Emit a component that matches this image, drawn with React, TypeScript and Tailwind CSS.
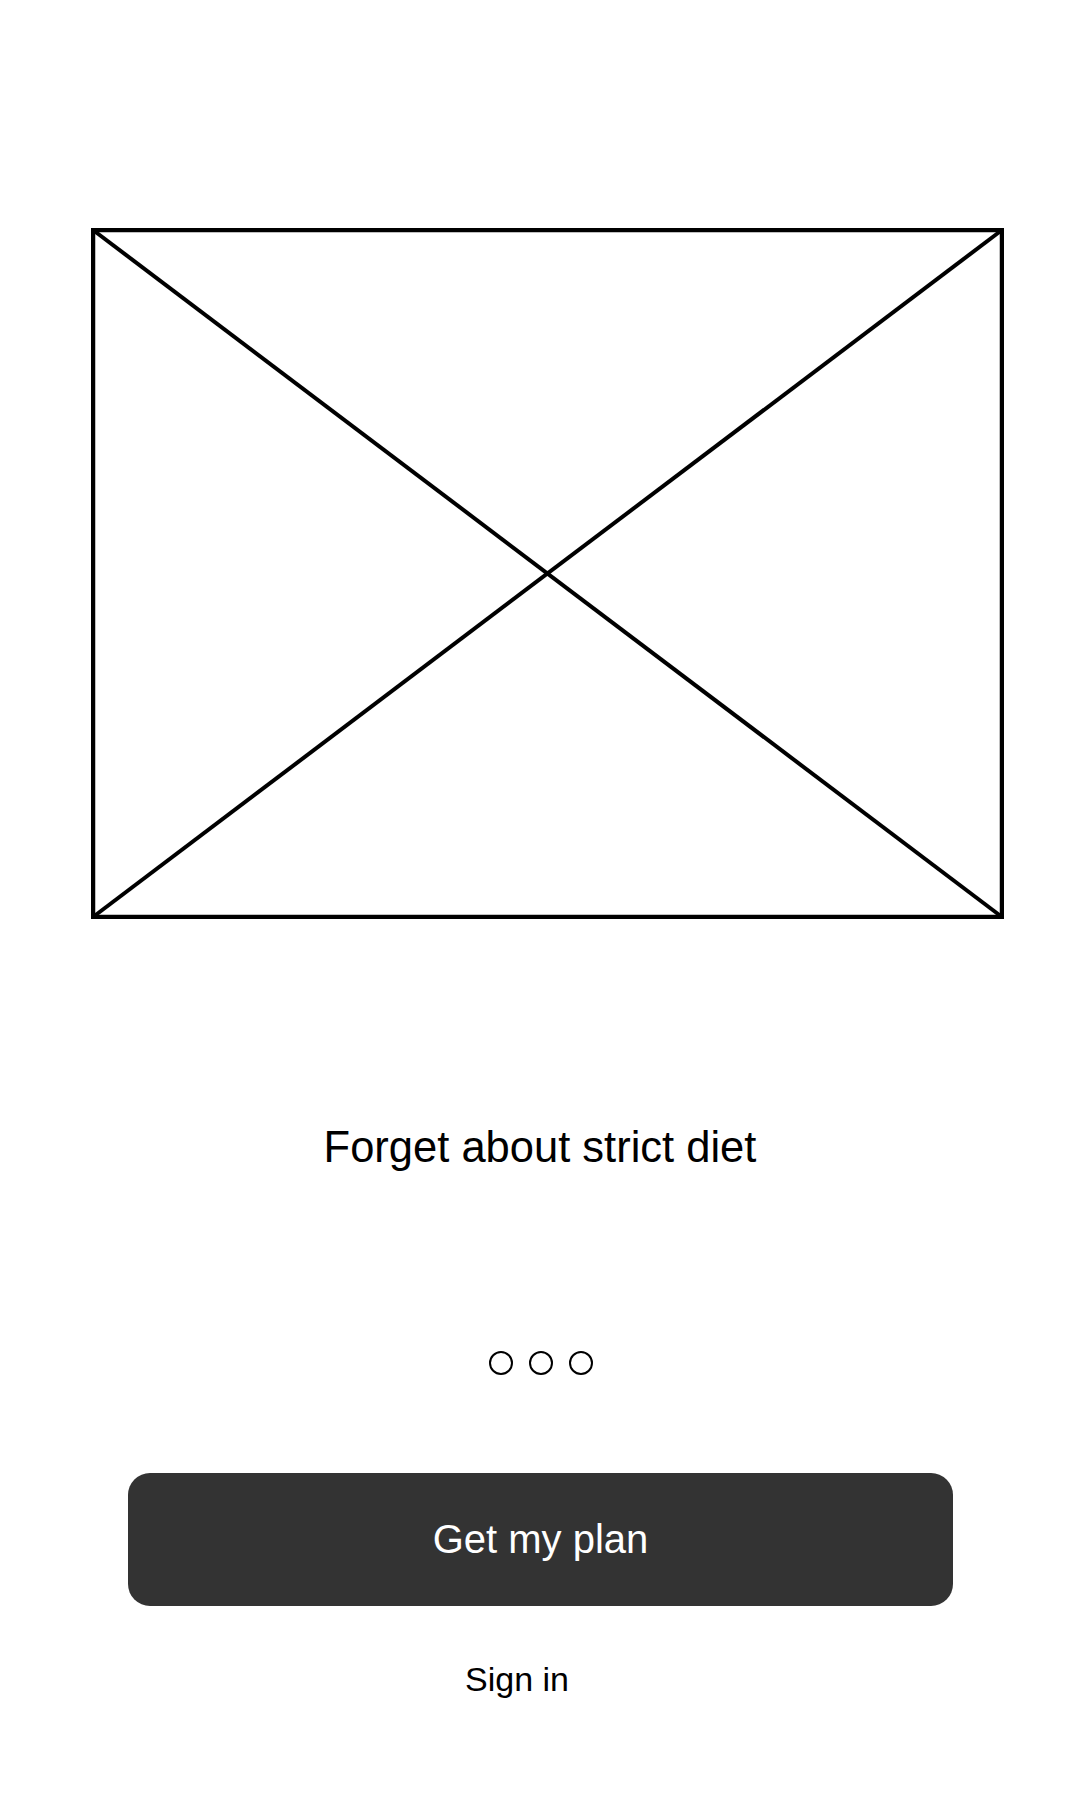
const Placeholder = () => {
  const w = 913;
  const h = 691;
  return (
    <svg width={w} height={h} viewBox={`0 0 ${w} ${h}`} className="block">
      <rect x={2} y={2} width={w - 4} height={h - 4} fill="none" stroke="#000" strokeWidth={4.5} />
      <line x1={2} y1={2} x2={w - 2} y2={h - 2} stroke="#000" strokeWidth={4} />
      <line x1={w - 2} y1={2} x2={2} y2={h - 2} stroke="#000" strokeWidth={4} />
    </svg>
  );
};

const Dots = () => {
  const dots = [0, 1, 2];
  return (
    <div className="flex justify-center gap-[16px] pl-[1px]">
      {dots.map((d) => (
        <span key={d} className="block h-[24px] w-[24px] rounded-full border-[2.5px] border-black" />
      ))}
    </div>
  );
};

export default function App() {
  return (
    <div className="flex min-h-[1800px] w-[1080px] flex-col bg-white font-['Liberation_Sans',Arial,sans-serif] text-black">
      <div className="ml-[91px] mt-[228px]">
        <Placeholder />
      </div>

      <h1 className="mt-[207px] text-center text-[43.5px] leading-none font-normal">
        Forget about strict diet
      </h1>

      <div className="mt-[181px]">
        <Dots />
      </div>

      <button className="ml-[128px] mt-[98px] flex h-[133px] w-[825px] items-center justify-center rounded-[22px] bg-[#333333] text-[40px] leading-none text-white">
        Get my plan
      </button>

      <div className="mt-[56px] flex justify-center pr-[46px]">
        <a className="text-[34px] leading-none">Sign in</a>
      </div>
    </div>
  );
}
